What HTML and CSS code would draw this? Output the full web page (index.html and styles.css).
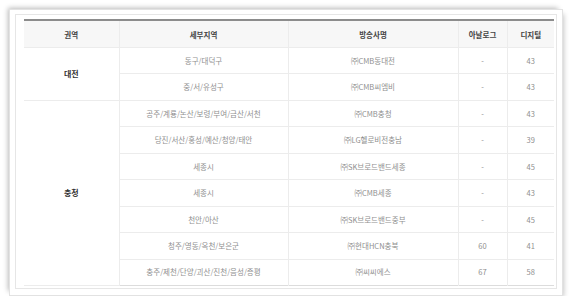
FILE: index.html
```html
<!DOCTYPE html>
<html lang="ko">
<head>
<meta charset="utf-8">
<link rel="stylesheet" href="styles.css">
</head>
<body>
<div class="page">
  <div class="frame">
    <div class="inner">
      <table class="grid">
        <colgroup>
          <col class="c1"><col class="c2"><col class="c3"><col class="c4"><col class="c5">
        </colgroup>
        <thead>
          <tr><th>권역</th><th>세부지역</th><th>방송사명</th><th>아날로그</th><th>디지털</th></tr>
        </thead>
        <tbody>
          <tr><td class="region" rowspan="2">대전</td><td>동구/대덕구</td><td>㈜CMB동대전</td><td>-</td><td>43</td></tr>
          <tr><td>중/서/유성구</td><td>㈜CMB씨엠비</td><td>-</td><td>43</td></tr>
          <tr><td class="region" rowspan="7">충청</td><td>공주/계룡/논산/보령/부여/금산/서천</td><td>㈜CMB충청</td><td>-</td><td>43</td></tr>
          <tr><td>당진/서산/홍성/예산/청양/태안</td><td>㈜LG헬로비전충남</td><td>-</td><td>39</td></tr>
          <tr><td>세종시</td><td>㈜SK브로드밴드세종</td><td>-</td><td>45</td></tr>
          <tr><td>세종시</td><td>㈜CMB세종</td><td>-</td><td>43</td></tr>
          <tr><td>천안/아산</td><td>㈜SK브로드밴드중부</td><td>-</td><td>45</td></tr>
          <tr><td>청주/영동/옥천/보은군</td><td>㈜현대HCN충북</td><td>60</td><td>41</td></tr>
          <tr><td>충주/제천/단양/괴산/진천/음성/증평</td><td>㈜씨씨에스</td><td>67</td><td>58</td></tr>
        </tbody>
      </table>
    </div>
  </div>
</div>
</body>
</html>
```

FILE: styles.css
```css
html, body {
  margin: 0;
  padding: 0;
  background: #ffffff;
}
body {
  font-family: "Noto Sans CJK KR", "Noto Sans", sans-serif;
}
.page {
  padding: 9px 0 0 9px;
  width: 554px;
}
.frame {
  border: 1px solid #e2e2e2;
  padding: 4px 5px 6px 5px;
  background: #fff;
  box-shadow: -3px -3px 5px -2px rgba(0,0,0,0.28), 3px 3px 5px -2px rgba(0,0,0,0.22);
}
.inner {
  border: 1px solid #e6e6e6;
  padding: 4px 2px 2px 8px;
}
.grid {
  width: 530px;
  table-layout: fixed;
  border-collapse: collapse;
  border-top: 2px solid #8c8c8c;
  border-bottom: 1px solid #dcdcdc;
}
.c1 { width: 95px; }
.c2 { width: 169px; }
.c3 { width: 170px; }
.c4 { width: 49px; }
.c5 { width: 47px; }
.grid th {
  height: 26px;
  padding: 0;
  background: #f7f7f7;
  color: #444;
  font-size: 7.5px;
  font-weight: bold;
  border-left: 1px solid #ececec;
  border-bottom: 1px solid #ececec;
}
.grid th:first-child { border-left: none; }
.grid td {
  height: 25.44px;
  padding: 0;
  text-align: center;
  color: #8f8f8f;
  font-size: 7.5px;
  border-left: 1px solid #ececec;
  border-bottom: 1px solid #ececec;
  line-height: 1;
}
.grid td.region {
  border-left: none;
  color: #333;
  font-size: 8px;
  font-weight: bold;
}
.grid tbody tr:last-child td { border-bottom: none; }
```
